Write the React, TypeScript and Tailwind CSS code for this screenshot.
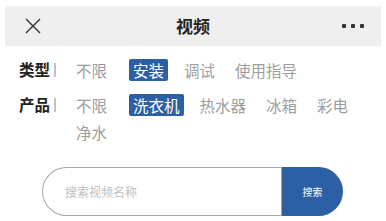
import { useState } from "react";

const types = ["不限", "安装", "调试", "使用指导"];
const products = ["不限", "洗衣机", "热水器", "冰箱", "彩电", "净水"];

function FilterRow({ label, items, active }: { label: string; items: string[]; active: string }) {
  return (
    <div className="flex items-start">
      <div className="w-[53px] h-[22px] flex items-center shrink-0">
        <span className="font-bold text-[#222] text-[15.5px] leading-none">{label}</span>
        <span className="ml-[4px] w-[2px] h-[14px] bg-[#c2c2c2]" />
      </div>
      <div className="flex flex-wrap gap-x-3 gap-y-[5px] flex-1">
        {items.map((item, i) => (
          <div
            key={item}
            className={`h-[22px] px-1 leading-[22px] text-[15.5px] rounded-[2px] ${i === 0 ? "mr-[6px]" : ""} ${
              item === active ? "bg-[#2c5fa4] text-white" : "text-[#9d9d9d]"
            }`}
          >
            {item}
          </div>
        ))}
      </div>
    </div>
  );
}

export default function App() {
  const [query, setQuery] = useState("");

  return (
    <div
      className="w-[386px] h-[221px] bg-white pt-[6px] px-[5px] overflow-hidden"
      style={{ fontFamily: '"Noto Sans CJK SC", "Noto Sans", sans-serif' }}
    >
      <div className="h-[40px] bg-[#efefef] flex items-center relative">
        <svg className="ml-[20px]" width="16" height="16" viewBox="0 0 16 16" fill="none" stroke="#333" strokeWidth="1.4">
          <path d="M1 1L15 15M15 1L1 15" />
        </svg>
        <div className="absolute inset-0 flex items-center justify-center text-[17px] font-bold text-[#222]">视频</div>
        <div className="ml-auto mr-[17px] flex gap-[5px]">
          <div className="w-[4px] h-[4px] bg-[#333] rounded-[1px]" />
          <div className="w-[4px] h-[4px] bg-[#333] rounded-[1px]" />
          <div className="w-[4px] h-[4px] bg-[#333] rounded-[1px]" />
        </div>
      </div>

      <div className="mt-[13px] pl-[14px] flex flex-col gap-[13px]">
        <FilterRow label="类型" items={types} active="安装" />
        <FilterRow label="产品" items={products} active="洗衣机" />
      </div>

      <div className="mt-[24px] ml-[37px] w-[301px] h-[49px] flex">
        <input
          value={query}
          onChange={e => setQuery(e.target.value)}
          placeholder="搜索视频名称"
          className="flex-1 min-w-0 h-full border border-[#a8a8a8] rounded-l-full rounded-r-[4px] pl-[22px] text-[12px] text-[#333] placeholder:text-[#c0c0c0] outline-none"
        />
        <button className="w-[61px] h-full bg-[#2c5fa4] rounded-r-full text-white text-[10px] flex items-center justify-center">
          搜索
        </button>
      </div>
    </div>
  );
}
